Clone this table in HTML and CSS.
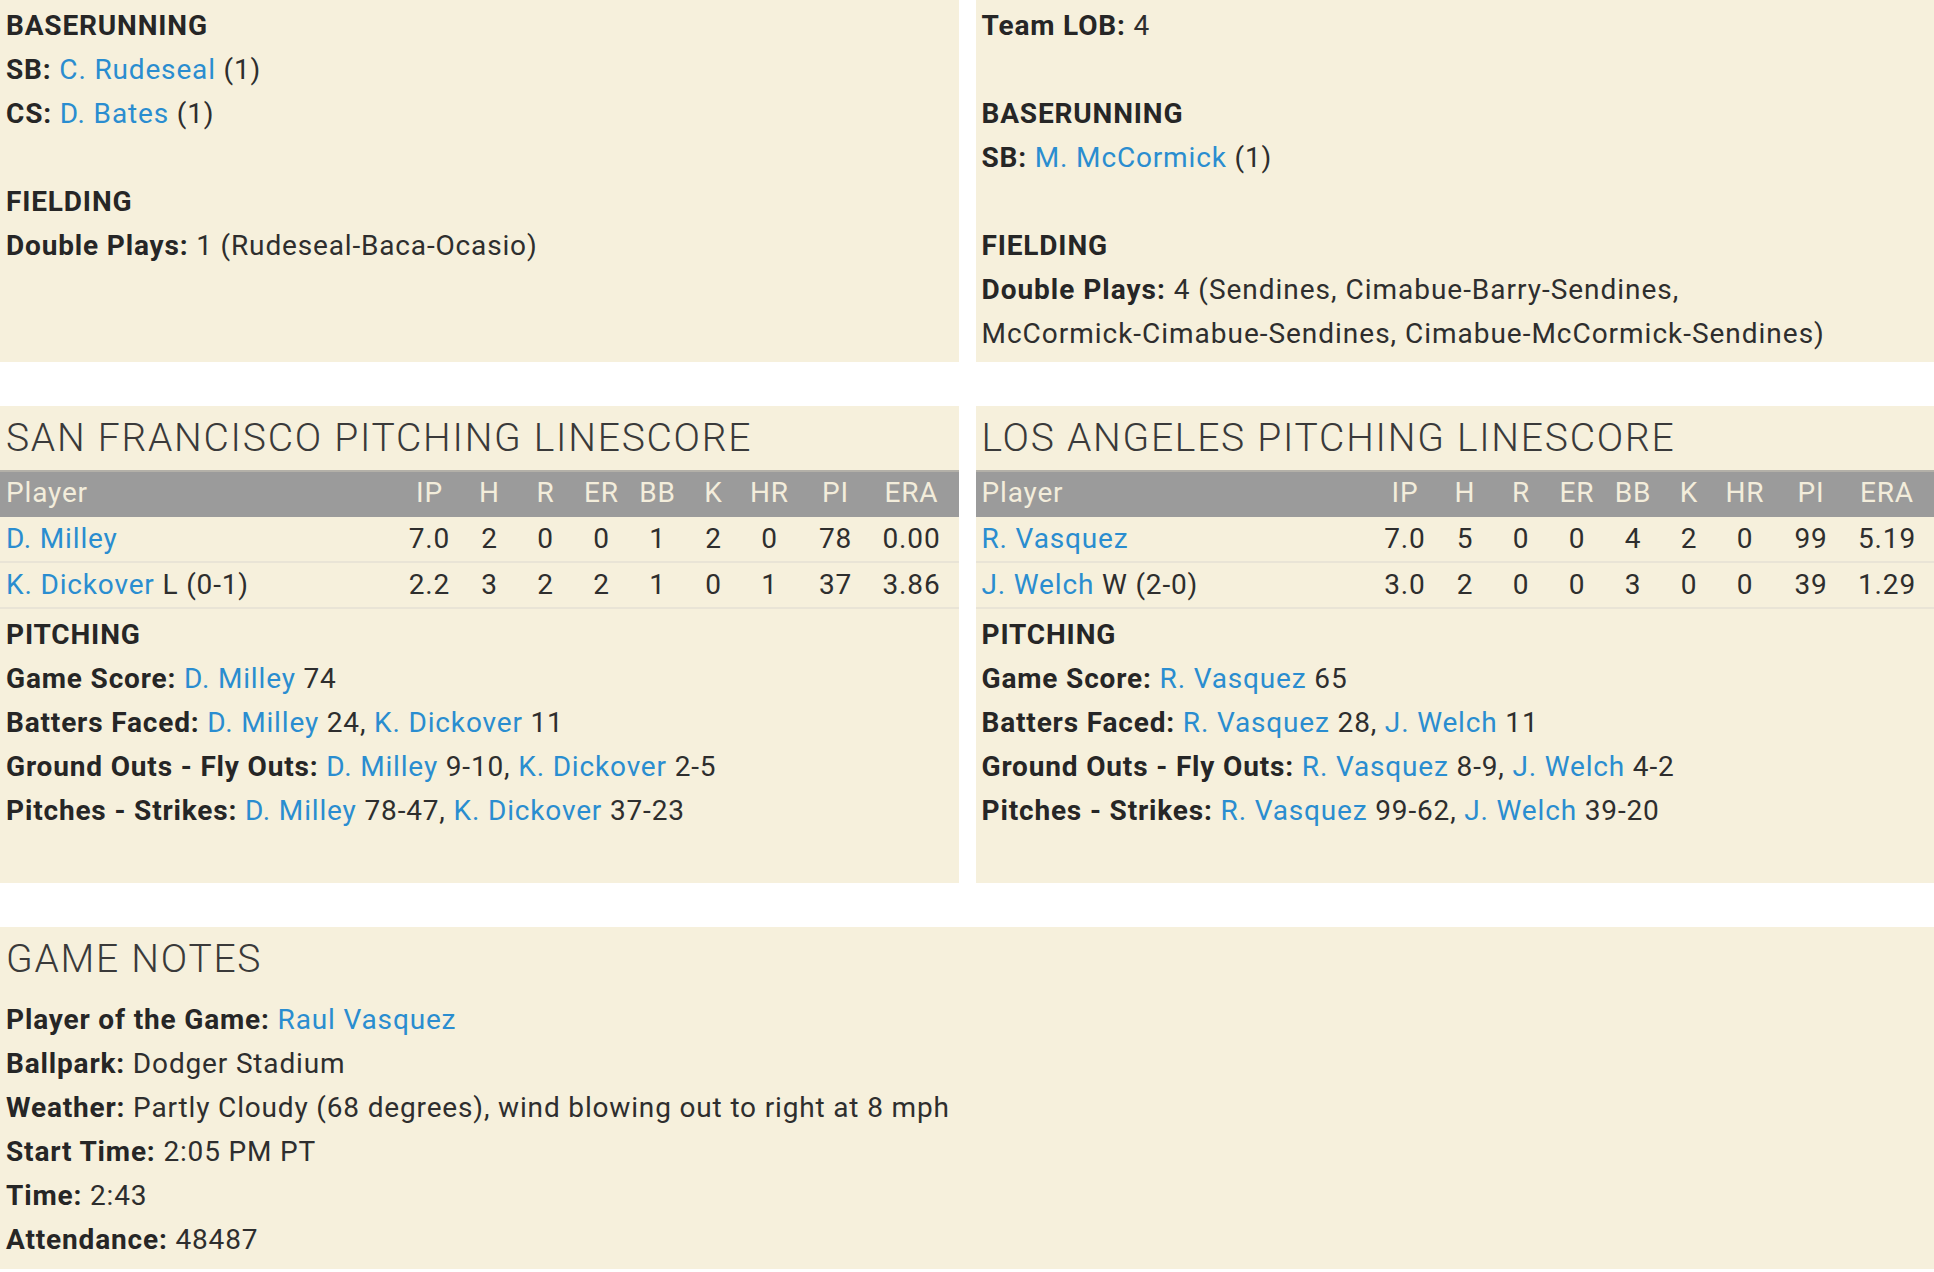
FILE: index.html
```html
<!DOCTYPE html>
<html lang="en">
<head>
<meta charset="utf-8">
<title>Box Score</title>
<link rel="stylesheet" href="styles.css">
</head>
<body>
<div class="page">
  <div class="pair">
    <section class="panel panel-top">
      <div class="line heading">BASERUNNING</div>
      <div class="line"><b>SB:</b> <a href="#">C. Rudeseal</a> (1)</div>
      <div class="line"><b>CS:</b> <a href="#">D. Bates</a> (1)</div>
      <div class="line"></div>
      <div class="line heading">FIELDING</div>
      <div class="line"><b>Double Plays:</b> 1 (Rudeseal-Baca-Ocasio)</div>
    </section>
    <section class="panel panel-top">
      <div class="line"><b>Team LOB:</b> 4</div>
      <div class="line"></div>
      <div class="line heading">BASERUNNING</div>
      <div class="line"><b>SB:</b> <a href="#">M. McCormick</a> (1)</div>
      <div class="line"></div>
      <div class="line heading">FIELDING</div>
      <div class="text"><b>Double Plays:</b> 4 (Sendines, <span class="nw">Cimabue-Barry-Sendines,</span> <span class="nw">McCormick-Cimabue-Sendines,</span> <span class="nw">Cimabue-McCormick-Sendines)</span></div>
    </section>
  </div>

  <div class="pair">
    <section class="panel panel-pitch">
      <h2 class="title">SAN FRANCISCO PITCHING LINESCORE</h2>
      <div class="table">
        <div class="trow thead">
          <div class="c-player">Player</div><div class="c">IP</div><div class="c">H</div><div class="c">R</div><div class="c">ER</div><div class="c">BB</div><div class="c">K</div><div class="c">HR</div><div class="c">PI</div><div class="c">ERA</div>
        </div>
        <div class="trow">
          <div class="c-player"><a href="#">D. Milley</a></div><div class="c">7.0</div><div class="c">2</div><div class="c">0</div><div class="c">0</div><div class="c">1</div><div class="c">2</div><div class="c">0</div><div class="c">78</div><div class="c">0.00</div>
        </div>
        <div class="trow">
          <div class="c-player"><a href="#">K. Dickover</a> L (0-1)</div><div class="c">2.2</div><div class="c">3</div><div class="c">2</div><div class="c">2</div><div class="c">1</div><div class="c">0</div><div class="c">1</div><div class="c">37</div><div class="c">3.86</div>
        </div>
      </div>
      <div class="notes">
        <div class="line heading">PITCHING</div>
        <div class="line"><b>Game Score:</b> <a href="#">D. Milley</a> 74</div>
        <div class="line"><b>Batters Faced:</b> <a href="#">D. Milley</a> 24, <a href="#">K. Dickover</a> 11</div>
        <div class="line"><b>Ground Outs - Fly Outs:</b> <a href="#">D. Milley</a> 9-10, <a href="#">K. Dickover</a> 2-5</div>
        <div class="line"><b>Pitches - Strikes:</b> <a href="#">D. Milley</a> 78-47, <a href="#">K. Dickover</a> 37-23</div>
      </div>
    </section>
    <section class="panel panel-pitch">
      <h2 class="title">LOS ANGELES PITCHING LINESCORE</h2>
      <div class="table">
        <div class="trow thead">
          <div class="c-player">Player</div><div class="c">IP</div><div class="c">H</div><div class="c">R</div><div class="c">ER</div><div class="c">BB</div><div class="c">K</div><div class="c">HR</div><div class="c">PI</div><div class="c">ERA</div>
        </div>
        <div class="trow">
          <div class="c-player"><a href="#">R. Vasquez</a></div><div class="c">7.0</div><div class="c">5</div><div class="c">0</div><div class="c">0</div><div class="c">4</div><div class="c">2</div><div class="c">0</div><div class="c">99</div><div class="c">5.19</div>
        </div>
        <div class="trow">
          <div class="c-player"><a href="#">J. Welch</a> W (2-0)</div><div class="c">3.0</div><div class="c">2</div><div class="c">0</div><div class="c">0</div><div class="c">3</div><div class="c">0</div><div class="c">0</div><div class="c">39</div><div class="c">1.29</div>
        </div>
      </div>
      <div class="notes">
        <div class="line heading">PITCHING</div>
        <div class="line"><b>Game Score:</b> <a href="#">R. Vasquez</a> 65</div>
        <div class="line"><b>Batters Faced:</b> <a href="#">R. Vasquez</a> 28, <a href="#">J. Welch</a> 11</div>
        <div class="line"><b>Ground Outs - Fly Outs:</b> <a href="#">R. Vasquez</a> 8-9, <a href="#">J. Welch</a> 4-2</div>
        <div class="line"><b>Pitches - Strikes:</b> <a href="#">R. Vasquez</a> 99-62, <a href="#">J. Welch</a> 39-20</div>
      </div>
    </section>
  </div>

  <section class="panel panel-notes">
    <h2 class="title title-notes">GAME NOTES</h2>
    <div class="line"><b>Player of the Game:</b> <a href="#">Raul Vasquez</a></div>
    <div class="line"><b>Ballpark:</b> Dodger Stadium</div>
    <div class="line"><b>Weather:</b> Partly Cloudy (68 degrees), wind blowing out to right at 8 mph</div>
    <div class="line"><b>Start Time:</b> 2:05 PM PT</div>
    <div class="line"><b>Time:</b> 2:43</div>
    <div class="line"><b>Attendance:</b> 48487</div>
  </section>
</div>
</body>
</html>
```

FILE: styles.css
```css
html, body {
  margin: 0;
  padding: 0;
  background: #ffffff;
}

body {
  font-family: Roboto, "Liberation Sans", sans-serif;
  font-size: 28px;
  line-height: 44px;
  letter-spacing: 0.03em;
  color: #2e2e2e;
}

.page {
  display: flex;
  flex-direction: column;
  gap: 44px;
}

.pair {
  display: grid;
  grid-template-columns: 1fr 1fr;
  column-gap: 17px;
}

.panel {
  background: #f6f0dc;
}

.panel-top {
  padding: 4px 6px 6px 6px;
}

.line {
  height: 44px;
  white-space: nowrap;
}

.text {
  line-height: 44px;
  letter-spacing: 0.035em;
}

.nw {
  white-space: nowrap;
}

b, .heading {
  font-weight: 700;
  color: #262626;
}

a {
  color: #2a8dd0;
  text-decoration: none;
}

.title {
  margin: 0;
  padding: 8px 6px 8px 6px;
  font-size: 39px;
  line-height: 48px;
  font-weight: 300;
  color: #3a3a3a;
  letter-spacing: 0.045em;
}

.title-notes {
  padding-bottom: 15px;
}

.panel-pitch {
  padding-bottom: 50px;
}

.trow {
  display: grid;
  grid-template-columns: 1fr 64px repeat(6, 56px) 76px 76px;
  padding-right: 9px;
  height: 44px;
  border-bottom: 2px solid #e9e4d6;
  white-space: nowrap;
}

.thead {
  background: #9b9b9b;
  color: #f3eddb;
  border-top: 2px solid #b3b0a8;
  border-bottom: none;
  height: 41px;
  line-height: 41px;
  padding-bottom: 4px;
}

.c-player {
  padding-left: 6px;
}

.c {
  text-align: center;
}

.notes {
  padding: 4px 6px 0 6px;
}

.panel-notes {
  padding: 0 6px 7px 0;
}

.panel-notes .line {
  padding-left: 6px;
}
```
